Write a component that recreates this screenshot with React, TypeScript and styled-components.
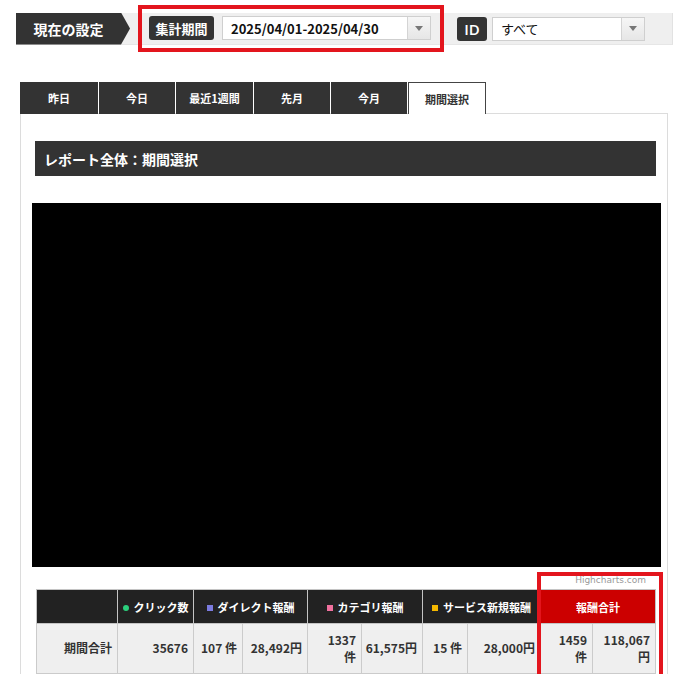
import React from 'react'
import styled, { createGlobalStyle } from 'styled-components'

const GlobalStyle = createGlobalStyle`
  html, body {
    margin: 0;
    padding: 0;
    background: #fff;
  }
  body {
    font-family: Meiryo, "Noto Sans CJK JP", "Noto Sans", sans-serif;
    color: #333;
  }
  * { box-sizing: border-box; }
`

/* ─── Types ─────────────────────────────────────────── */
interface Tab {
  label: string
  width: number
  active?: boolean
}

interface HeadCol {
  label: string
  span: number
  marker?: string
  round?: boolean
  total?: boolean
}

interface Cell {
  value: string
  padLeft?: number
}

/* ─── Data ──────────────────────────────────────────── */
const TABS: Tab[] = [
  { label: '昨日', width: 78 },
  { label: '今日', width: 76 },
  { label: '最近1週間', width: 77 },
  { label: '先月', width: 76 },
  { label: '今月', width: 76 },
  { label: '期間選択', width: 78, active: true },
]

const COLS = [81, 76, 49, 65, 54, 61, 45, 73, 52, 63]

const HEAD: HeadCol[] = [
  { label: '', span: 1 },
  { label: 'クリック数', span: 1, marker: '#2bcf7c', round: true },
  { label: 'ダイレクト報酬', span: 2, marker: '#7b7be0' },
  { label: 'カテゴリ報酬', span: 2, marker: '#f0709e' },
  { label: 'サービス新規報酬', span: 2, marker: '#f5b800' },
  { label: '報酬合計', span: 2, total: true },
]

const ROW: Cell[] = [
  { value: '期間合計' },
  { value: '35676' },
  { value: '107 件' },
  { value: '28,492円' },
  { value: '1337 件', padLeft: 8 },
  { value: '61,575円', padLeft: 2 },
  { value: '15 件' },
  { value: '28,000円' },
  { value: '1459 件', padLeft: 8 },
  { value: '118,067円', padLeft: 10 },
]

/* ─── Styled Components ─────────────────────────────── */
const Page = styled.div`
  width: 679px;
  padding: 13px 6px 0 16px;
`

const SettingsBar = styled.div`
  display: flex;
  align-items: center;
  height: 32px;
  background: #efefef;
  border-right: 1px solid #e2e2e2;
  border-bottom: 1px solid #e6e6e6;
`

const CurrentLabel = styled.div`
  flex-shrink: 0;
  width: 114px;
  height: 32px;
  padding-right: 9px;
  display: flex;
  align-items: center;
  justify-content: center;
  background: #333;
  color: #fff;
  font-size: 14px;
  font-weight: 700;
  clip-path: polygon(0 0, calc(100% - 9px) 0, 100% 50%, calc(100% - 9px) 100%, 0 100%);
`

const PeriodGroup = styled.div`
  flex-shrink: 0;
  display: flex;
  align-items: center;
  gap: 8px;
  margin-left: 8px;
  padding: 7px 9px 8px 7px;
  border: 4px solid #e3151d;
`

const TagLabel = styled.div<{ $width: number; $size: number }>`
  flex-shrink: 0;
  width: ${p => p.$width}px;
  height: 24px;
  display: flex;
  align-items: center;
  justify-content: center;
  background: #333;
  border-radius: 3px;
  color: #fff;
  font-size: ${p => p.$size}px;
  font-weight: 700;
`

const IdLabel = styled(TagLabel)`
  margin-left: 13px;
  font-family: "Open Sans", "Noto Sans", sans-serif;
  font-weight: 600;
`

const Select = styled.div<{ $width: number; $gap?: number }>`
  flex-shrink: 0;
  display: flex;
  width: ${p => p.$width}px;
  height: 24px;
  margin-left: ${p => p.$gap || 0}px;
  background: #fff;
  border: 1px solid #cfcfcf;
`

const SelectValue = styled.div<{ $bold?: boolean }>`
  flex: 1;
  display: flex;
  align-items: center;
  padding-left: 8px;
  color: #111;
  font-size: 13px;
  font-weight: ${p => (p.$bold ? 700 : 400)};
  white-space: nowrap;
`

const CaretBox = styled.div`
  width: 23px;
  display: flex;
  align-items: center;
  justify-content: center;
  background: linear-gradient(#f6f6f6, #e6e6e6);
  border-left: 1px solid #d4d4d4;

  &::before {
    content: '';
    border-left: 4px solid transparent;
    border-right: 4px solid transparent;
    border-top: 5px solid #777;
  }
`

const Tabs = styled.div`
  display: flex;
  gap: 1px;
  height: 32px;
  margin: 37px 5px -1px 4px;
  position: relative;
  z-index: 1;
`

const TabItem = styled.div<{ $width: number; $active?: boolean }>`
  flex-shrink: 0;
  width: ${p => p.$width}px;
  display: flex;
  align-items: center;
  justify-content: center;
  background: ${p => (p.$active ? '#fff' : '#333')};
  color: ${p => (p.$active ? '#333' : '#fff')};
  border: ${p => (p.$active ? '1px solid #444' : 'none')};
  border-bottom: none;
  font-size: 11px;
  font-weight: 700;
`

const Panel = styled.div`
  margin: 0 5px 0 4px;
  padding: 27px 11px 0 14px;
  border: 1px solid #dcdcdc;
  border-bottom: none;
`

const SectionTitle = styled.h2`
  margin: 0;
  height: 35px;
  display: flex;
  align-items: center;
  padding-left: 9px;
  background: #333;
  color: #fff;
  font-size: 14px;
  font-weight: 700;
`

const Chart = styled.div`
  height: 364px;
  margin: 27px -5px 0 -3px;
  background: #000;
`

const Credits = styled.div`
  height: 22px;
  padding: 8px 10px 0 0;
  text-align: right;
  font-family: "DejaVu Sans", Verdana, sans-serif;
  font-size: 9px;
  line-height: 10px;
  color: #999;
`

const TableWrap = styled.div`
  position: relative;
  margin-left: 1px;
`

const Table = styled.table`
  width: 620px;
  border-collapse: collapse;
  table-layout: fixed;
  font-size: 12px;
  font-weight: 700;
`

const HeadCell = styled.th<{ $total?: boolean }>`
  height: 34px;
  padding: 0 4px;
  border: 1px solid #c4c4c4;
  background: ${p => (p.$total ? '#cc0000' : '#222')};
  color: #fff;
  font-size: 11px;
  font-weight: 700;
  text-align: center;
  white-space: nowrap;
`

const Marker = styled.span<{ $color: string; $round?: boolean }>`
  display: inline-block;
  width: 6px;
  height: 6px;
  margin-right: 5px;
  vertical-align: 1px;
  background: ${p => p.$color};
  border-radius: ${p => (p.$round ? '50%' : '0')};
`

const BodyCell = styled.td<{ $padLeft?: number }>`
  height: 50px;
  padding: 0 5px 0 ${p => p.$padLeft ?? 5}px;
  border: 1px solid #cbcbcb;
  background: #efefef;
  color: #333;
  text-align: right;
  line-height: 1.35;
`

const Highlight = styled.div`
  position: absolute;
  left: 501px;
  top: -17px;
  width: 126px;
  height: 160px;
  border: 4px solid #e3151d;
  pointer-events: none;
`

/* ─── Component ──────────────────────────────────────── */
export default function App() {
  return (
    <>
      <GlobalStyle />
      <Page>
        <SettingsBar>
          <CurrentLabel>現在の設定</CurrentLabel>
          <PeriodGroup>
            <TagLabel $width={65} $size={13}>集計期間</TagLabel>
            <Select $width={209}>
              <SelectValue $bold>2025/04/01-2025/04/30</SelectValue>
              <CaretBox />
            </Select>
          </PeriodGroup>
          <IdLabel $width={30} $size={15}>ID</IdLabel>
          <Select $width={153} $gap={5}>
            <SelectValue>すべて</SelectValue>
            <CaretBox />
          </Select>
        </SettingsBar>

        <Tabs>
          {TABS.map(t => (
            <TabItem key={t.label} $width={t.width} $active={t.active}>
              {t.label}
            </TabItem>
          ))}
        </Tabs>

        <Panel>
          <SectionTitle>レポート全体：期間選択</SectionTitle>
          <Chart />
          <Credits>Highcharts.com</Credits>
          <TableWrap>
            <Table>
              <colgroup>
                {COLS.map((w, i) => (
                  <col key={i} style={{ width: w }} />
                ))}
              </colgroup>
              <thead>
                <tr>
                  {HEAD.map((h, i) => (
                    <HeadCell key={i} colSpan={h.span} $total={h.total}>
                      {h.marker && <Marker $color={h.marker} $round={h.round} />}
                      {h.label}
                    </HeadCell>
                  ))}
                </tr>
              </thead>
              <tbody>
                <tr>
                  {ROW.map((c, i) => (
                    <BodyCell key={i} $padLeft={c.padLeft}>{c.value}</BodyCell>
                  ))}
                </tr>
              </tbody>
            </Table>
            <Highlight />
          </TableWrap>
        </Panel>
      </Page>
    </>
  )
}
